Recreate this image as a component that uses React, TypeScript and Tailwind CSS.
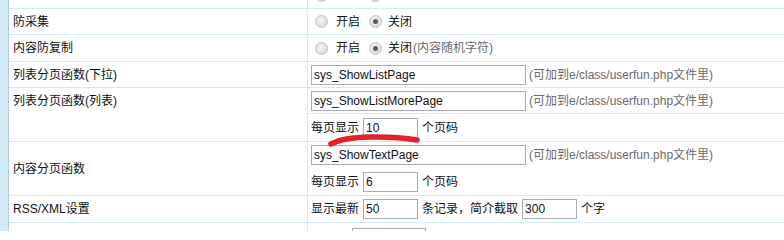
import React from "react";

const LINE = "border-[#d4ebf1]";
const font = "font-['Liberation_Sans','Noto_Sans_CJK_SC',sans-serif]";

function Radio({ checked }: { checked?: boolean }) {
  return (
    <span className="flex h-[13px] w-[13px] shrink-0 items-center justify-center rounded-full border border-[#c4c4c4] bg-[radial-gradient(circle_at_45%_40%,#f6f6f6_0%,#e2e2e2_55%,#cdcdcd_100%)]">
      {checked && <span className="h-[5px] w-[5px] rounded-full bg-[#5a5a5a]" />}
    </span>
  );
}

function TextInput({ value, w }: { value: string; w: string }) {
  return (
    <div
      className={`flex h-[20px] ${w} shrink-0 items-center border border-[#a9acb2] bg-white pl-[2px] text-[12px] text-[#111]`}
    >
      {value}
    </div>
  );
}

function Hint() {
  return <span className="ml-[3px] text-[#6b6b6b]">(可加到e/class/userfun.php文件里)</span>;
}

function Row({
  h,
  label,
  children,
}: {
  h: string;
  label: React.ReactNode;
  children: React.ReactNode;
}) {
  return (
    <div className={`flex ${h} shrink-0 border-b ${LINE}`}>
      <div className={`flex w-[299px] shrink-0 items-center border-r ${LINE} pl-[4px]`}>{label}</div>
      <div className="flex min-w-0 flex-1 flex-col">{children}</div>
    </div>
  );
}

function Sub({ children }: { children: React.ReactNode }) {
  return <div className="flex flex-1 items-center pl-[3px]">{children}</div>;
}

function Radios({ extra }: { extra?: string }) {
  return (
    <div className="flex flex-1 items-center">
      <span className="ml-[7px]">
        <Radio />
      </span>
      <span className="ml-[8px]">开启</span>
      <span className="ml-[9px]">
        <Radio checked />
      </span>
      <span className="ml-[6px]">关闭</span>
      {extra && <span className="ml-[1px] text-[#6b6b6b]">{extra}</span>}
    </div>
  );
}

export default function App() {
  return (
    <div className={`relative flex h-[231px] w-[784px] overflow-hidden bg-white text-[12px] leading-none text-[#111] ${font}`}>
      <div className="w-[9px] shrink-0 border-r border-[#a8cfe6] bg-[#d5eaf7]" />
      <div className="mt-[-18px] flex flex-1 flex-col">
        <Row h="h-[27px]" label="模板支持程序代码">
          <Radios />
        </Row>
        <Row h="h-[26px]" label="防采集">
          <Radios />
        </Row>
        <Row h="h-[27px]" label="内容防复制">
          <Radios extra="(内容随机字符)" />
        </Row>
        <Row h="h-[26px]" label="列表分页函数(下拉)">
          <Sub>
            <TextInput value="sys_ShowListPage" w="w-[215px]" />
            <Hint />
          </Sub>
        </Row>
        <div className={`flex h-[54px] shrink-0 border-b ${LINE}`}>
          <div className={`flex w-[299px] shrink-0 flex-col border-r ${LINE} pl-[4px]`}>
            <div className="flex h-[25px] items-center">列表分页函数(列表)</div>
          </div>
          <div className="flex flex-1 flex-col">
            <div className={`flex h-[26px] items-center border-b ${LINE} pl-[3px]`}>
              <TextInput value="sys_ShowListMorePage" w="w-[215px]" />
              <Hint />
            </div>
            <div className="flex flex-1 items-center pl-[3px]">
              <span>每页显示</span>
              <span className="ml-[4px]">
                <TextInput value="10" w="w-[55px]" />
              </span>
              <span className="ml-[4px]">个页码</span>
            </div>
          </div>
        </div>
        <Row h="h-[54px]" label="内容分页函数">
          <Sub>
            <TextInput value="sys_ShowTextPage" w="w-[215px]" />
            <Hint />
          </Sub>
          <Sub>
            <span>每页显示</span>
            <span className="ml-[4px]">
              <TextInput value="6" w="w-[55px]" />
            </span>
            <span className="ml-[4px]">个页码</span>
          </Sub>
        </Row>
        <Row h="h-[27px]" label="RSS/XML设置">
          <Sub>
            <span>显示最新</span>
            <span className="ml-[4px]">
              <TextInput value="50" w="w-[55px]" />
            </span>
            <span className="ml-[4px]">条记录，简介截取</span>
            <span className="ml-[4px]">
              <TextInput value="300" w="w-[55px]" />
            </span>
            <span className="ml-[4px]">个字</span>
          </Sub>
        </Row>
        <div className="flex h-[30px] shrink-0">
          <div className={`w-[299px] shrink-0 border-r ${LINE}`} />
          <div className="flex flex-1 items-start pt-[5px] pl-[44px]">
            <TextInput value="" w="w-[74px]" />
          </div>
        </div>
      </div>
      <svg
        className="pointer-events-none absolute left-0 top-0"
        width="784"
        height="231"
        viewBox="0 0 784 231"
      >
        <path
          d="M331 144 Q343 137.5 370 137 T417 140"
          fill="none"
          stroke="#e3222b"
          strokeWidth="5.5"
          strokeLinecap="round"
        />
      </svg>
    </div>
  );
}
